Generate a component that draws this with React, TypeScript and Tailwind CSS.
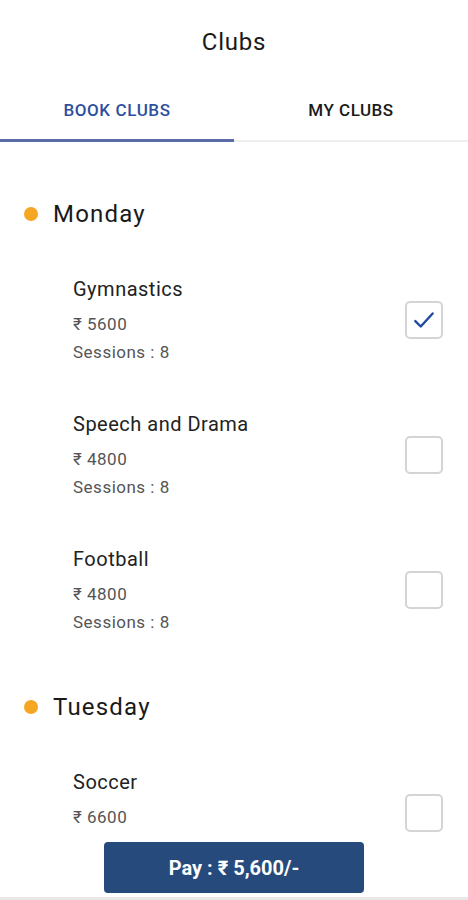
interface Club {
  name: string;
  price: number;
  sessions: number;
  checked?: boolean;
}

interface Day {
  day: string;
  clubs: Club[];
}

const days: Day[] = [
  {
    day: "Monday",
    clubs: [
      { name: "Gymnastics", price: 5600, sessions: 8, checked: true },
      { name: "Speech and Drama", price: 4800, sessions: 8 },
      { name: "Football", price: 4800, sessions: 8 },
    ],
  },
  {
    day: "Tuesday",
    clubs: [{ name: "Soccer", price: 6600, sessions: 8 }],
  },
];

function CheckBox({ checked }: { checked?: boolean }) {
  return (
    <div className="flex h-[38px] w-[38px] items-center justify-center rounded-[5px] border-2 border-[#d4d4d4] bg-white">
      {checked && (
        <svg width="26" height="26" viewBox="0 0 24 24" fill="none" stroke="#1f4aa0" strokeWidth="2.2" strokeLinecap="round" strokeLinejoin="round">
          <path d="M4 13l5 5L20 6" />
        </svg>
      )}
    </div>
  );
}

function ClubRow({ club }: { club: Club }) {
  return (
    <div className="flex items-center pl-[73px] pr-[25px]">
      <div className="flex flex-1 flex-col">
        <div className="text-[20px] leading-[24px] tracking-[0.5px] text-[#222]">{club.name}</div>
        <div className="mt-[12px] text-[17px] leading-[22px] tracking-[0.5px] text-[#555]">₹ {club.price}</div>
        <div className="mt-[6px] text-[17px] leading-[22px] tracking-[0.5px] text-[#555]">Sessions : {club.sessions}</div>
      </div>
      <CheckBox checked={club.checked} />
    </div>
  );
}

export default function App() {
  return (
    <div
      className="relative h-[900px] w-[468px] overflow-hidden bg-white"
      style={{ fontFamily: "Roboto, 'Noto Sans', sans-serif" }}
    >
      <div className="flex h-[83px] items-center justify-center text-[24px] tracking-[0.8px] text-[#1a1a1a]">Clubs</div>
      <div className="flex">
        <div className="flex flex-1 flex-col">
          <div className="flex h-[56px] items-center justify-center text-[17px] font-medium tracking-[0.6px] text-[#2d4f9e]">BOOK CLUBS</div>
          <div className="h-[3px] bg-[#5a6ba8]" />
        </div>
        <div className="flex flex-1 flex-col">
          <div className="flex h-[56px] items-center justify-center text-[17px] font-medium tracking-[0.5px] text-[#1a1a1a]">MY CLUBS</div>
          <div className="h-[3px] border-b-2 border-[#eeeeee]" />
        </div>
      </div>

      <div className="flex flex-col">
        {days.map((d, i) => (
          <div key={d.day} className={i === 0 ? "pt-[58px]" : "pt-[60px]"}>
            <div className="flex items-center pl-[24px]">
              <span className="h-[14px] w-[14px] rounded-full bg-[#f5a623]" />
              <span className="ml-[15px] text-[24px] leading-[28px] tracking-[1.2px] text-[#1a1a1a]">{d.day}</span>
            </div>
            <div className="flex flex-col gap-[49px] pt-[49px]">
              {d.clubs.map((c) => (
                <ClubRow key={c.name} club={c} />
              ))}
            </div>
          </div>
        ))}
      </div>

      <div className="absolute inset-x-0 bottom-0 flex flex-col items-center bg-white pt-[6px]">
        <button className="flex h-[51px] w-[260px] items-center justify-center rounded-[4px] bg-[#264a7b] text-[20px] font-bold text-white">
          Pay : ₹ 5,600/-
        </button>
        <div className="mt-[4px] h-[3px] w-full bg-[#e8e8e8]" />
      </div>
    </div>
  );
}
